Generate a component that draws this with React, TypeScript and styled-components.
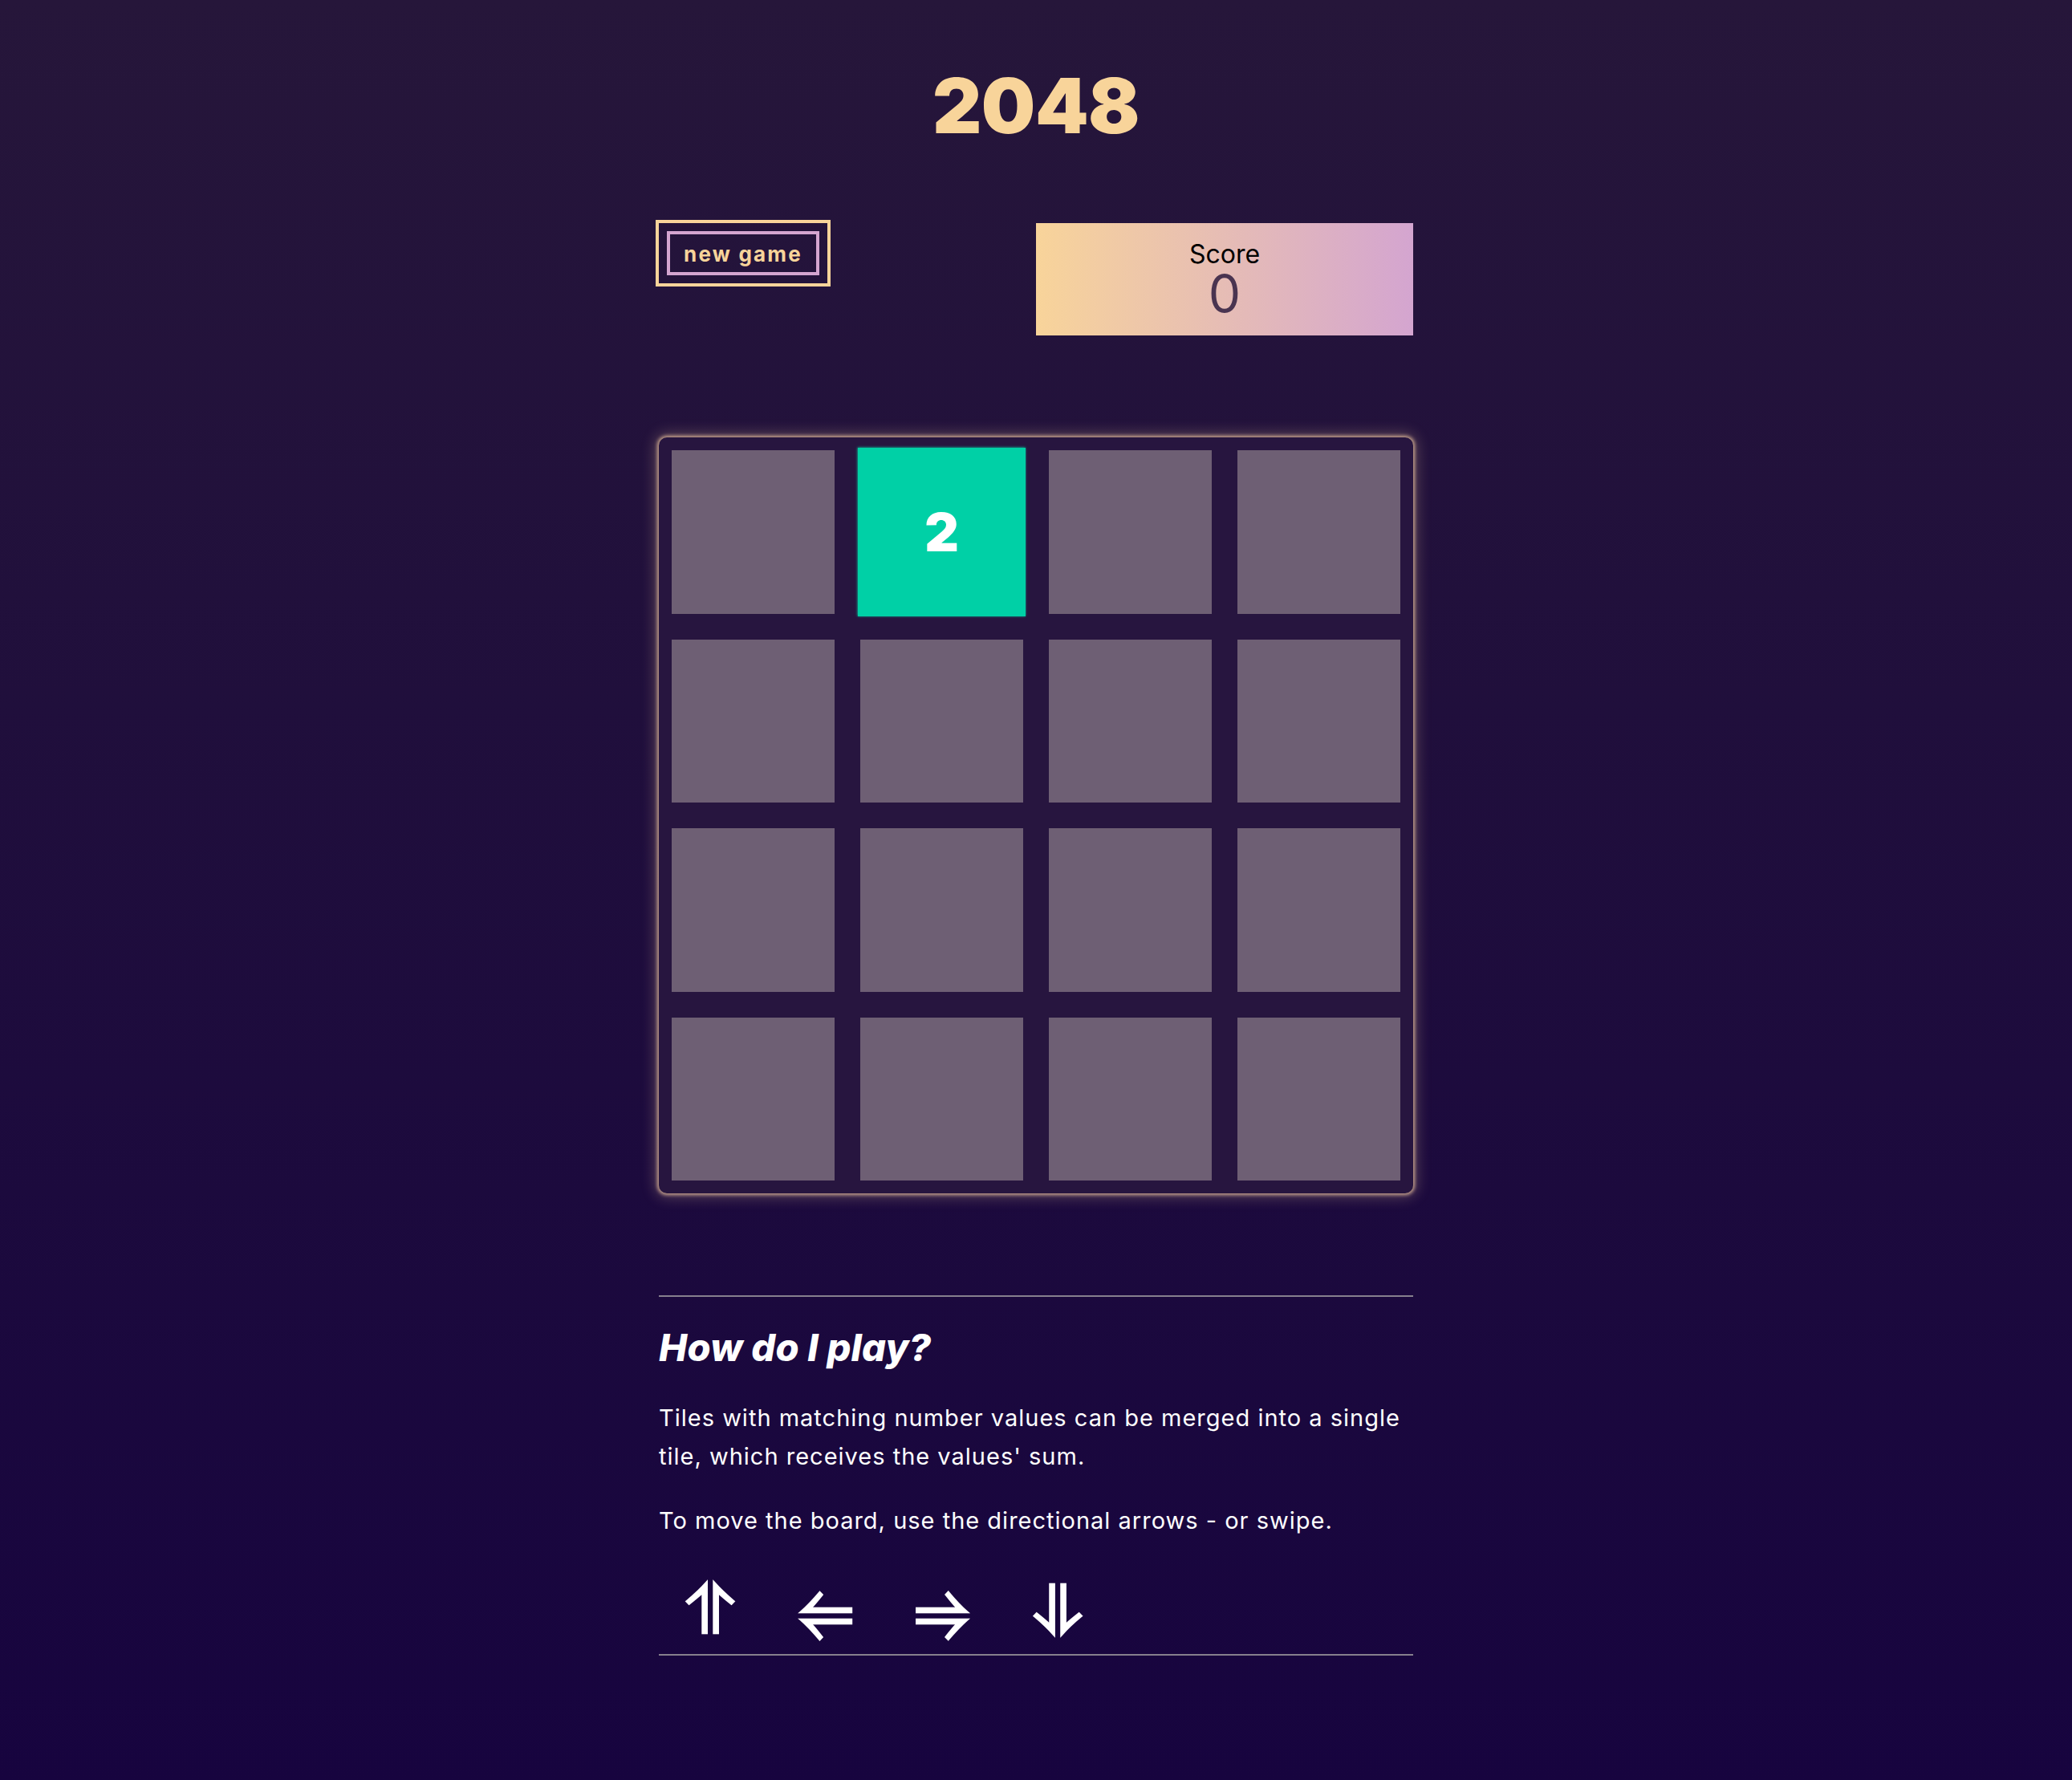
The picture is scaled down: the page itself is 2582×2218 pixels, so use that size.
import React from "react";
import styled, { createGlobalStyle } from "styled-components";

const GlobalStyle = createGlobalStyle`
  html, body {
    margin: 0;
    padding: 0;
  }
  body {
    min-height: 100vh;
    background: linear-gradient(180deg, #26163a 0%, #17043f 100%);
    font-family: Inter, "Noto Sans", "Liberation Sans", sans-serif;
    color: #ffffff;
  }
`;

const Page = styled.main`
  width: 940px;
  margin: 0 auto;
  padding: 84px 0 160px;
  display: flex;
  flex-direction: column;
`;

const Title = styled.h1`
  margin: 0;
  font-size: 95px;
  line-height: 96px;
  font-weight: 900;
  color: #f8d49a;
  text-align: center;
  letter-spacing: -0.5px;
`;

const Header = styled.div`
  margin-top: 98px;
  display: flex;
  justify-content: space-between;
  align-items: flex-start;
`;

const NewGameButton = styled.button`
  margin: 10px 0 0 10px;
  width: 190px;
  height: 55px;
  box-sizing: border-box;
  background: transparent;
  border: 4px solid #d4a5d0;
  outline: 4px solid #f8d49a;
  outline-offset: 10px;
  color: #f8d49a;
  font-family: Inter, "Liberation Sans", sans-serif;
  font-size: 26px;
  font-weight: 700;
  letter-spacing: 2.2px;
  padding: 2px 0 0;
  cursor: pointer;
`;

const ScoreBox = styled.div`
  width: 470px;
  height: 140px;
  box-sizing: border-box;
  padding-top: 23px;
  background: linear-gradient(90deg, #f8d49a 0%, #d4a5d0 100%);
  display: flex;
  flex-direction: column;
  align-items: center;
`;

const ScoreLabel = styled.div`
  font-size: 32px;
  line-height: 32px;
  color: #000000;
`;

const ScoreValue = styled.div`
  margin-top: 2px;
  font-size: 64px;
  line-height: 62px;
  font-weight: 400;
  color: #4a3450;
`;

const Board = styled.div`
  margin-top: 127px;
  width: 940px;
  height: 942px;
  box-sizing: border-box;
  padding: 16px;
  display: grid;
  grid-template-columns: repeat(4, 1fr);
  grid-template-rows: repeat(4, 1fr);
  gap: 32px;
  background: #27153f;
  border-radius: 10px;
  box-shadow: 0 0 4px 2px rgba(240, 200, 160, 0.75),
    0 0 18px 4px rgba(240, 200, 160, 0.3);
`;

const Tile = styled.div<{ $value?: number }>`
  display: flex;
  align-items: center;
  justify-content: center;
  background: ${(p) => (p.$value ? "#00d0a6" : "#6e5f74")};
  color: #ffffff;
  font-size: 64px;
  font-weight: 900;
  transform: ${(p) => (p.$value ? "scale(1.03)" : "none")};
  box-shadow: ${(p) => (p.$value ? "0 0 3px #0fb898" : "none")};
`;

const Rule = styled.hr`
  margin: 127px 0 0;
  border: 0;
  height: 2px;
  background: #86808e;
`;

const HowTitle = styled.h2`
  margin: 35px 0 0;
  font-size: 47px;
  line-height: 55px;
  font-weight: 800;
  font-style: italic;
  letter-spacing: 0.2px;
`;

const Paragraph = styled.p<{ $first?: boolean }>`
  margin: ${(p) => (p.$first ? "37px" : "32px")} 0 0;
  font-size: 29px;
  line-height: 48px;
  font-weight: 400;
  letter-spacing: 1px;
`;

const Arrows = styled.div`
  margin-top: 32px;
  height: 110px;
  display: flex;
  gap: 16px;
  align-items: center;
  border-bottom: 2px solid #86808e;
`;

const ArrowButton = styled.button`
  width: 128px;
  height: 100%;
  padding: 0;
  border: 0;
  background: transparent;
  color: #ffffff;
  font-family: "DejaVu Sans", sans-serif;
  font-size: 84px;
  font-weight: 700;
  line-height: 1;
  cursor: pointer;
`;

const board = [
  [0, 2, 0, 0],
  [0, 0, 0, 0],
  [0, 0, 0, 0],
  [0, 0, 0, 0],
];

export default function App() {
  return (
    <>
      <GlobalStyle />
      <Page>
        <Title>2048</Title>
        <Header>
          <NewGameButton>new game</NewGameButton>
          <ScoreBox>
            <ScoreLabel>Score</ScoreLabel>
            <ScoreValue>0</ScoreValue>
          </ScoreBox>
        </Header>
        <Board>
          {board.flat().map((v, i) => (
            <Tile key={i} $value={v}>
              {v ? v : ""}
            </Tile>
          ))}
        </Board>
        <Rule />
        <HowTitle>How do I play?</HowTitle>
        <Paragraph $first>
          Tiles with matching number values can be merged into a single tile,
          which receives the values' sum.
        </Paragraph>
        <Paragraph>
          To move the board, use the directional arrows - or swipe.
        </Paragraph>
        <Arrows>
          <ArrowButton aria-label="up">⥣</ArrowButton>
          <ArrowButton aria-label="left">⥢</ArrowButton>
          <ArrowButton aria-label="right">⥤</ArrowButton>
          <ArrowButton aria-label="down">⥥</ArrowButton>
        </Arrows>
      </Page>
    </>
  );
}
